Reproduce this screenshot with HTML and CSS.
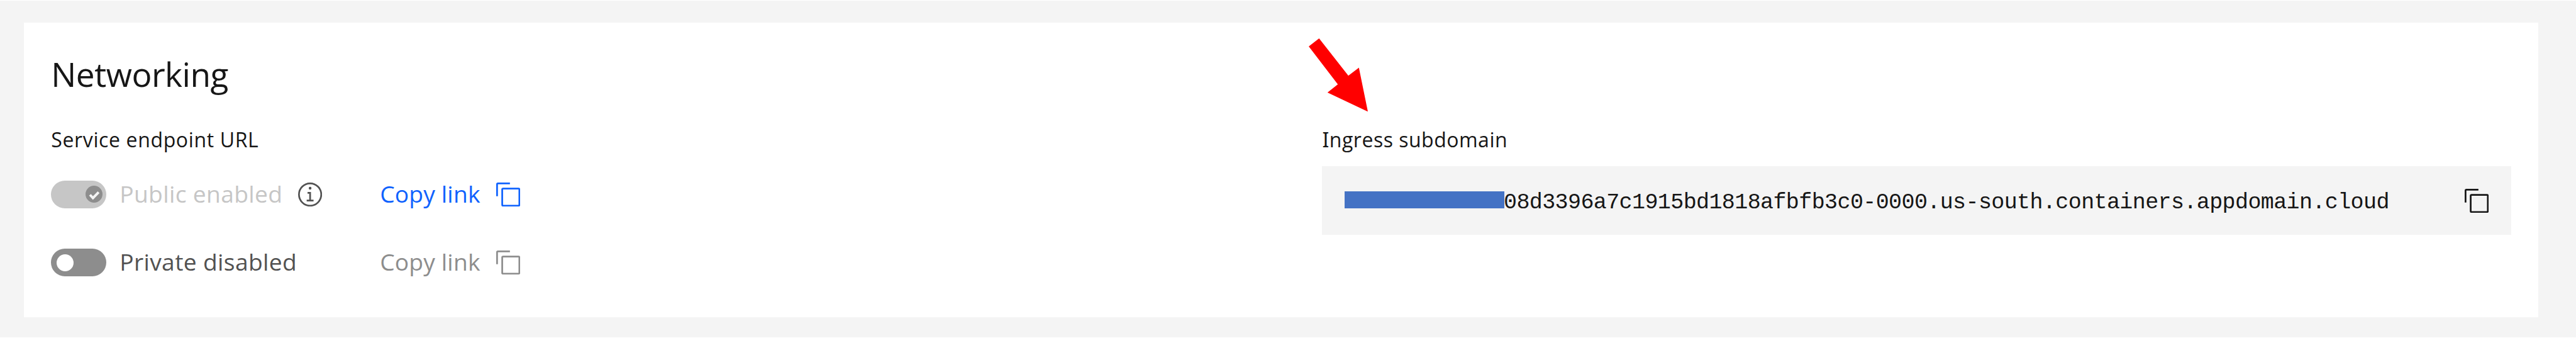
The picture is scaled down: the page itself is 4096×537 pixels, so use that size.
FILE: index.html
```html
<!DOCTYPE html>
<html lang="en">
<head>
<meta charset="utf-8">
<title>Networking</title>
<link rel="stylesheet" href="styles.css">
</head>
<body>
<svg class="sprite" aria-hidden="true">
  <symbol id="copy" viewBox="2 2 28 28">
    <rect x="9" y="9" width="20" height="20" rx="1" fill="none" stroke="currentColor" stroke-width="2"/>
    <path d="M18 3H4a1 1 0 0 0-1 1V18" fill="none" stroke="currentColor" stroke-width="2"/>
  </symbol>
  <symbol id="info" viewBox="2 2 28 28">
    <circle cx="16" cy="16" r="13" fill="none" stroke="currentColor" stroke-width="2"/>
    <path d="M17 22V13H13V15H15V22H12V24H20V22Z" fill="currentColor"/>
    <circle cx="16" cy="8.6" r="1.6" fill="currentColor"/>
  </symbol>
</svg>
<main class="card">
  <h2 class="title">Networking</h2>
  <div class="columns">
    <section>
      <h3 class="label label-endpoint">Service endpoint URL</h3>
      <div class="endpoints">
        <div class="endpoint">
          <div class="state">
            <span class="toggle toggle-on">
              <span class="knob"><svg class="check" viewBox="0 0 28 28"><path d="M7.2 14.8L12 20L21.2 10.6" fill="none" stroke="#f4f4f4" stroke-width="4"/></svg></span>
            </span>
            <span class="state-text muted">Public enabled</span>
            <svg class="icon info"><use href="#info"/></svg>
          </div>
          <a class="copy-link active"><span>Copy link</span><svg class="icon"><use href="#copy"/></svg></a>
        </div>
        <div class="endpoint">
          <div class="state">
            <span class="toggle toggle-off"><span class="knob"></span></span>
            <span class="state-text">Private disabled</span>
          </div>
          <a class="copy-link"><span>Copy link</span><svg class="icon"><use href="#copy"/></svg></a>
        </div>
      </div>
    </section>
    <section>
      <h3 class="label label-ingress"><span class="serif-i">I</span>ngress subdomain</h3>
      <div class="snippet">
        <span class="redaction"></span>
        <code class="host">08d3396a7c1915bd1818afbfb3c0-0000.us-south.containers.appdomain.cloud</code>
        <svg class="icon snippet-copy"><use href="#copy"/></svg>
      </div>
    </section>
  </div>
  <svg class="arrow" viewBox="0 0 303 375"><path d="M0 41L53 0L203 191L257 150L303 375L96 277L149 235Z" fill="#ff0000"/></svg>
</main>
</body>
</html>
```
FILE: styles.css
```css
* { box-sizing: border-box; }

body {
  margin: 0;
  height: 537px;
  padding: 35px 60px 32.5px 38px;
  border-top: 1px solid #fff;
  border-bottom: 1px solid #fff;
  background: #f4f4f4;
  color: #161616;
  font-family: "Open Sans", "Noto Sans", sans-serif;
  overflow: hidden;
}

.sprite { display: none; }

.card {
  position: relative;
  height: 467.5px;
  padding: 52.2px 43.3px 0;
  background: #fff;
}

.title {
  margin: 0 0 53.4px;
  font-size: 53.2px;
  line-height: 60px;
  font-weight: 400;
  letter-spacing: -0.5px;
}

.columns {
  display: grid;
  grid-template-columns: 2021.2px 1fr;
}

.label {
  margin: 0;
  font-size: 32px;
  line-height: 40px;
  font-weight: 400;
}

.label-endpoint { letter-spacing: 0.63px; }
.label-ingress { letter-spacing: 0.5px; }
.serif-i { font-family: "Noto Sans", sans-serif; }

.endpoints {
  display: grid;
  gap: 64.8px;
  margin-top: 44.1px;
}

.endpoint {
  display: grid;
  grid-template-columns: 522.9px auto;
  justify-content: start;
  height: 44px;
}

.state,
.copy-link {
  display: flex;
  align-items: center;
  font-size: 37.2px;
  line-height: 44px;
  white-space: nowrap;
}

.state { color: #525252; }

.state-text {
  padding-bottom: 2px;
  margin-left: 21.6px;
  letter-spacing: 0.35px;
}

.muted { color: #c6c6c6; }

.toggle {
  display: flex;
  align-items: center;
  width: 87.3px;
  height: 44px;
  border-radius: 22px;
}

.toggle-on {
  justify-content: flex-end;
  padding-right: 5.3px;
  background: #c6c6c6;
}

.toggle-off {
  padding-left: 8.3px;
  background: #8d8d8d;
}

.knob {
  width: 27.5px;
  height: 27.5px;
  border-radius: 50%;
  background: #fff;
}

.toggle-on .knob { background: #8d8d8d; }

.check {
  display: block;
  width: 100%;
  height: 100%;
}

.icon {
  flex: none;
  width: 38.2px;
  height: 38.2px;
}

.info {
  margin-left: 25px;
  color: #525252;
}

.copy-link {
  color: #8d8d8d;
  gap: 25.2px;
  letter-spacing: 0.16px;
}

.copy-link span { padding-bottom: 2px; }
.copy-link.active { color: #0f62fe; }

.snippet {
  display: flex;
  align-items: center;
  width: 1890.5px;
  height: 108.6px;
  margin-top: 22.8px;
  padding: 0 35.5px 0 35.1px;
  background: #f4f4f4;
}

.redaction {
  width: 254.8px;
  height: 27px;
  margin-bottom: 2px;
  background: #4472c4;
}

.host {
  margin-left: -1.4px;
  padding-top: 6px;
  font: 35px/40px "Liberation Mono", monospace;
  letter-spacing: -0.6px;
}

.snippet-copy { margin-left: auto; }

.arrow {
  position: absolute;
  left: 2042.5px;
  top: 24.5px;
  width: 94px;
  height: 116.4px;
}
```
